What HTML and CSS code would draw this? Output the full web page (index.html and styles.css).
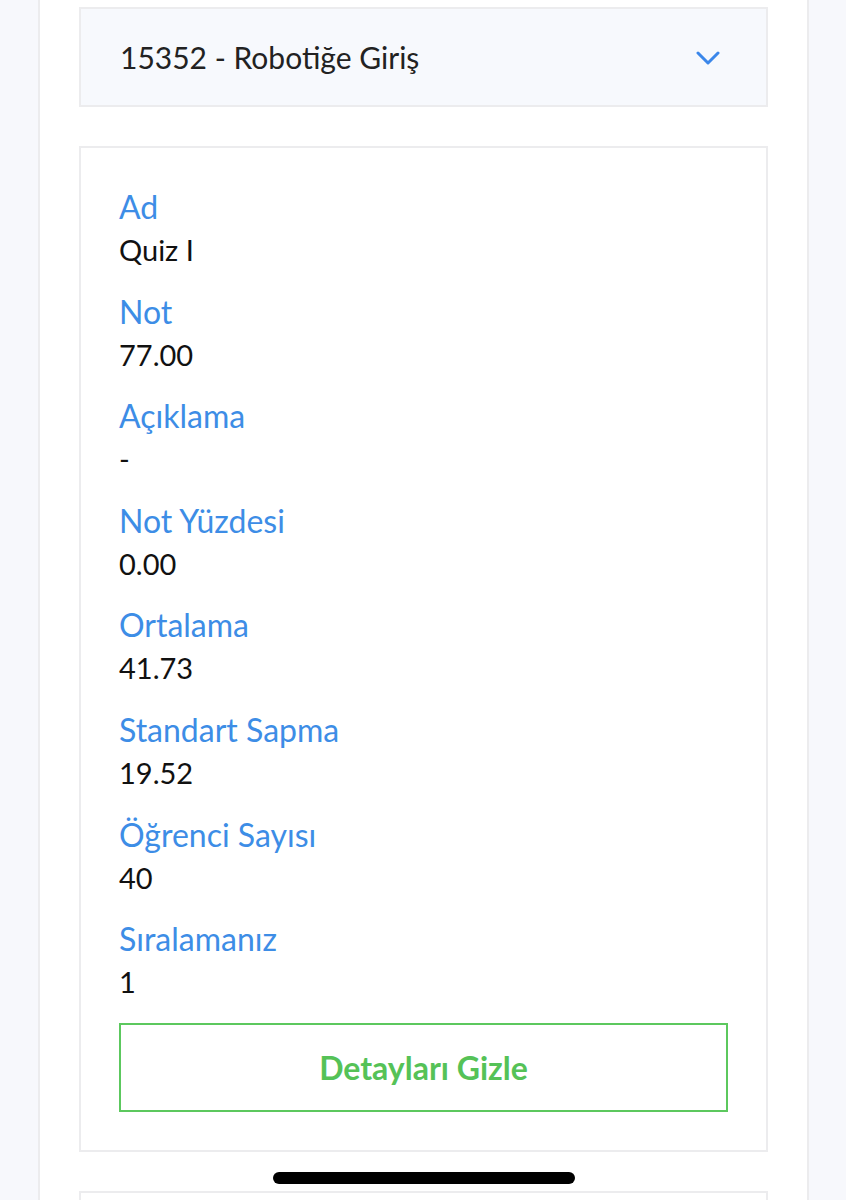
FILE: index.html
```html
<!DOCTYPE html>
<html lang="tr">
<head>
    <meta charset="UTF-8">
    <meta name="viewport" content="width=device-width, initial-scale=1.0">
    <title>Notlar</title>
    <link rel="stylesheet" href="styles.css">
</head>
<body>
    <div class="panel">
        <div class="course">
            <span class="course-name">15352 - Robotiğe Giriş</span>
            <svg class="chevron" width="24" height="16" viewBox="0 0 24 16">
                <path d="M2 3 L12 13 L22 3" fill="none" stroke="#3b87ea" stroke-width="3" stroke-linecap="round" stroke-linejoin="round"/>
            </svg>
        </div>

        <div class="card">
            <div class="field">
                <div class="label">Ad</div>
                <div class="value">Quiz I</div>
            </div>
            <div class="field">
                <div class="label">Not</div>
                <div class="value">77.00</div>
            </div>
            <div class="field">
                <div class="label">Açıklama</div>
                <div class="value">-</div>
            </div>
            <div class="field">
                <div class="label">Not Yüzdesi</div>
                <div class="value">0.00</div>
            </div>
            <div class="field">
                <div class="label">Ortalama</div>
                <div class="value">41.73</div>
            </div>
            <div class="field">
                <div class="label">Standart Sapma</div>
                <div class="value">19.52</div>
            </div>
            <div class="field">
                <div class="label">Öğrenci Sayısı</div>
                <div class="value">40</div>
            </div>
            <div class="field">
                <div class="label">Sıralamanız</div>
                <div class="value">1</div>
            </div>
            <button class="btn-toggle">Detayları Gizle</button>
        </div>

        <div class="card card-next"></div>
    </div>

    <div class="home-bar"></div>
</body>
</html>
```

FILE: styles.css
```css
body {
    margin: 0;
    height: 1200px;
    overflow: hidden;
    background-color: #f7f8fc;
    font-family: Lato, "Noto Sans", sans-serif;
    color: #111;
}

.panel {
    width: 771px;
    margin-left: 38px;
    margin-top: -20px;
    padding: 27px 39px 0;
    box-sizing: border-box;
    height: 1240px;
    background-color: #fff;
    border-left: 2px solid #ececee;
    border-right: 2px solid #ececee;
}

.course {
    height: 100px;
    box-sizing: border-box;
    border: 2px solid #ececee;
    background-color: #f7f9fd;
    display: flex;
    align-items: center;
    justify-content: space-between;
    padding: 0 46px 0 39px;
}

.course-name {
    font-size: 30px;
    color: #222;
}

.chevron {
    display: block;
    margin-top: 2px;
}

.card {
    margin-top: 39px;
    border: 2px solid #ececee;
    padding: 37px 38px 38px;
    background-color: #fff;
}

.field {
    margin-bottom: 18.6px;
}

.label,
.value {
    line-height: 43px;
}

.label {
    font-size: 32px;
    color: #3d8de6;
}

.value {
    font-size: 29px;
    color: #111;
}

.field:last-of-type {
    margin-bottom: 20px;
}

.btn-toggle {
    display: block;
    width: 100%;
    height: 89px;
    background-color: #fff;
    border: 2px solid #5cc85e;
    color: #55c257;
    font-family: inherit;
    font-size: 32px;
    font-weight: bold;
    cursor: pointer;
}

.card-next {
    height: 60px;
    padding: 0;
}

.home-bar {
    position: fixed;
    left: 273px;
    top: 1172px;
    width: 302px;
    height: 12px;
    border-radius: 6px;
    background-color: #000;
}
```
